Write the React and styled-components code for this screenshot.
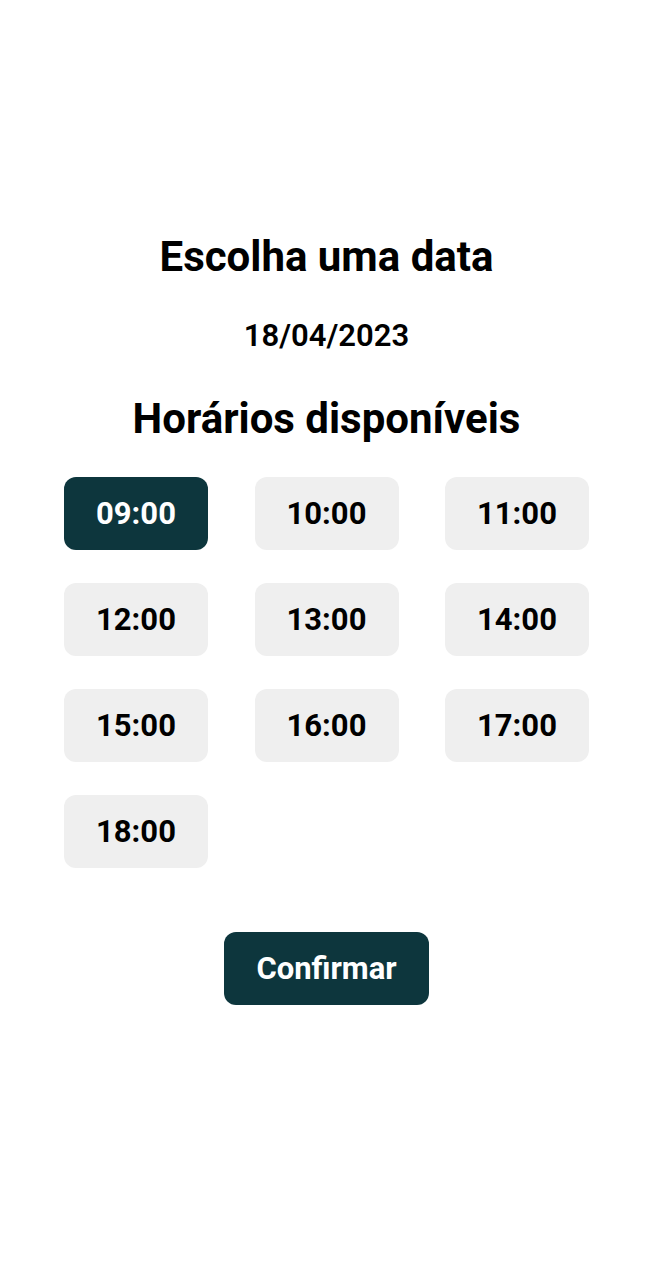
import React, { useState } from "react";
import styled, { createGlobalStyle } from "styled-components";

const Global = createGlobalStyle`
  html, body { margin: 0; padding: 0; background: #ffffff; }
  body { font-family: Roboto, "Noto Sans", "Liberation Sans", sans-serif; color: #000; }
`;

const Page = styled.div`
  display: flex;
  flex-direction: column;
  align-items: center;
  padding-top: 232px;
  min-height: 1280px;
  box-sizing: border-box;
`;

const Title = styled.h1`
  margin: 0;
  font-size: 42px;
  line-height: 50px;
  font-weight: 700;
`;

const DateText = styled.div`
  margin-top: 35px;
  font-size: 31px;
  line-height: 38px;
  font-weight: 600;
`;

const Subtitle = styled.h2`
  margin: 39px 0 0;
  font-size: 42px;
  line-height: 50px;
  font-weight: 700;
`;

const Grid = styled.div`
  margin-top: 33px;
  display: grid;
  grid-template-columns: repeat(3, 144px);
  column-gap: 46.5px;
  row-gap: 33px;
`;

const Slot = styled.button`
  width: 144px;
  height: 73px;
  border: none;
  border-radius: 12px;
  background: ${(p) => (p.$active ? "#0d363d" : "#efefef")};
  color: ${(p) => (p.$active ? "#ffffff" : "#000000")};
  font-family: inherit;
  font-size: 31px;
  font-weight: 700;
  cursor: pointer;
  padding: 0;
`;

const Confirm = styled.button`
  margin-top: 64px;
  width: 205px;
  height: 73px;
  border: none;
  border-radius: 12px;
  background: #0d363d;
  color: #ffffff;
  font-family: inherit;
  font-size: 31px;
  font-weight: 700;
  cursor: pointer;
  padding: 0;
`;

const times = ["09:00", "10:00", "11:00", "12:00", "13:00", "14:00", "15:00", "16:00", "17:00", "18:00"];

export default function App() {
  const [sel, setSel] = useState("09:00");
  return (
    <>
      <Global />
      <Page>
        <Title>Escolha uma data</Title>
        <DateText>18/04/2023</DateText>
        <Subtitle>Horários disponíveis</Subtitle>
        <Grid>
          {times.map((t) => (
            <Slot key={t} $active={t === sel} onClick={() => setSel(t)}>
              {t}
            </Slot>
          ))}
        </Grid>
        <Confirm>Confirmar</Confirm>
      </Page>
    </>
  );
}
